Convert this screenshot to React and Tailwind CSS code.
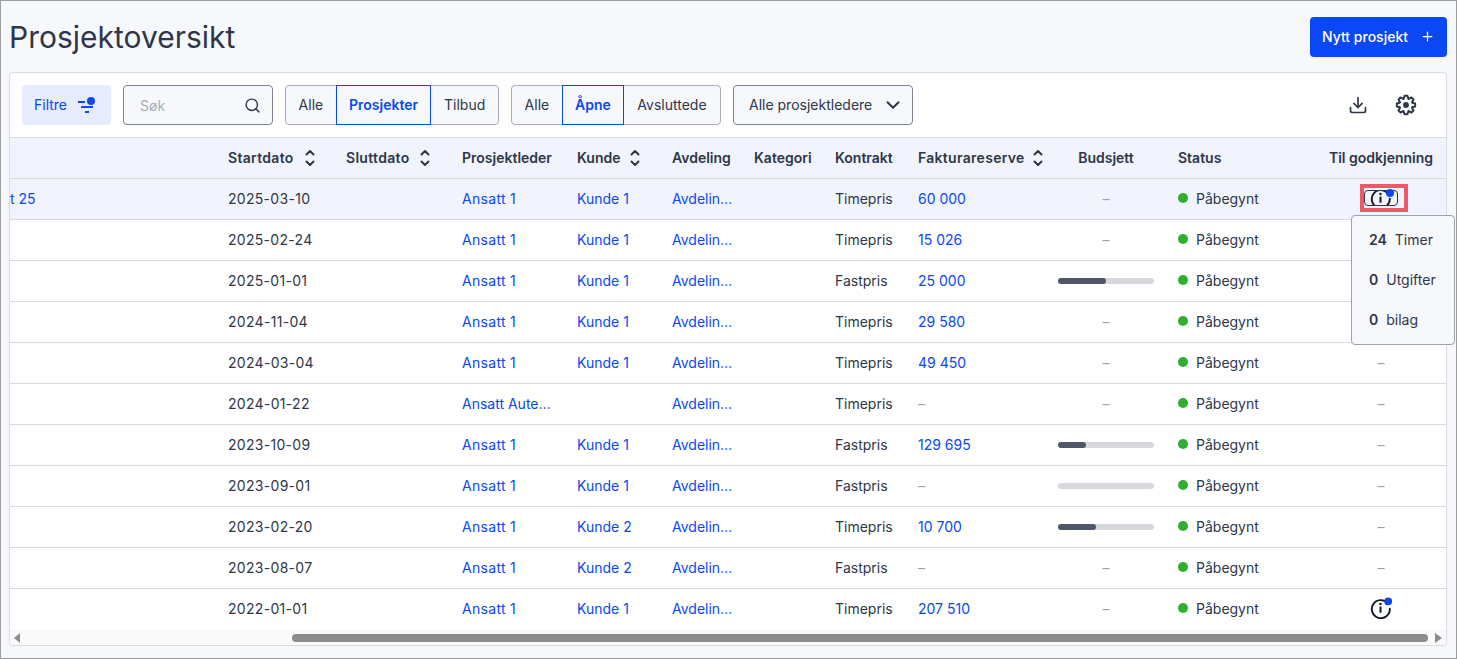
import React from "react";
import { Search, Download, ChevronDown, Plus } from "lucide-react";

const cols = "grid grid-cols-[218px_118px_116px_115px_95px_82px_81px_83px_128px_120px_150px_130px]";

const rows = [
  ["2025-03-10", "Ansatt 1", "Kunde 1", "Timepris", "60 000", null, "info-open"],
  ["2025-02-24", "Ansatt 1", "Kunde 1", "Timepris", "15 026", null, ""],
  ["2025-01-01", "Ansatt 1", "Kunde 1", "Fastpris", "25 000", 50, ""],
  ["2024-11-04", "Ansatt 1", "Kunde 1", "Timepris", "29 580", null, ""],
  ["2024-03-04", "Ansatt 1", "Kunde 1", "Timepris", "49 450", null, "-"],
  ["2024-01-22", "Ansatt Aute…", "", "Timepris", "-", null, "-"],
  ["2023-10-09", "Ansatt 1", "Kunde 1", "Fastpris", "129 695", 29, "-"],
  ["2023-09-01", "Ansatt 1", "Kunde 1", "Fastpris", "-", 0, "-"],
  ["2023-02-20", "Ansatt 1", "Kunde 2", "Timepris", "10 700", 40, "-"],
  ["2023-08-07", "Ansatt 1", "Kunde 2", "Fastpris", "-", null, "-"],
  ["2022-01-01", "Ansatt 1", "Kunde 1", "Timepris", "207 510", null, "info"],
];

function Sort() {
  return (
    <svg width="12" height="20" viewBox="0 0 12 20" fill="none" stroke="#2e3648" strokeWidth="2" strokeLinecap="round" strokeLinejoin="round">
      <path d="M2.5 6.5 6 3l3.5 3.5" />
      <path d="M2.5 13.5 6 17l3.5-3.5" />
    </svg>
  );
}

function Info({ noDot }) {
  return (
    <svg className="shrink-0" width="22" height="22" viewBox="0 0 22 22" fill="none">
      <path d="M17.6 6.2A9 9 0 1 0 19.8 11.8" stroke="#111827" strokeWidth="1.9" strokeLinecap="round" />
      <circle cx="10.5" cy="7" r="1.25" fill="#111827" />
      <rect x="9.5" y="9.6" width="2" height="6.2" rx="0.5" fill="#111827" />
      {!noDot && <circle cx="18.2" cy="4.4" r="3.9" fill="#0a47f5" />}
    </svg>
  );
}

function gearPath() {
  const teeth = 8;
  const pts = [];
  for (let k = 0; k < teeth; k++) {
    const a = (k * 2 * Math.PI) / teeth - Math.PI / 2;
    const step = (2 * Math.PI) / teeth;
    [[7.2, -0.46], [10.1, -0.2], [10.1, 0.2], [7.2, 0.46]].forEach(([r, f]) => {
      const t = a + f * step;
      pts.push(`${(12 + r * Math.cos(t)).toFixed(2)} ${(12 + r * Math.sin(t)).toFixed(2)}`);
    });
  }
  return "M" + pts.join("L") + "Z";
}

function Gear() {
  return (
    <svg width="22" height="22" viewBox="0 0 24 24" fill="none" stroke="#2e3648" strokeWidth="2.2" strokeLinejoin="round">
      <path d={gearPath()} />
      <circle cx="12" cy="12" r="3.2" fill="#2e3648" stroke="none" />
    </svg>
  );
}

function FilterIcon() {
  return (
    <svg width="18" height="18" viewBox="0 0 18 18" fill="none" stroke="#0a47f5" strokeWidth="2">
      <path d="M0 6h7M3 11h12M7 16h4" />
      <circle cx="13" cy="5" r="4" fill="#0a47f5" stroke="none" />
    </svg>
  );
}

function Seg({ items, active, width = "" }) {
  return (
    <div className={`flex h-10 rounded border border-[#a9adb6] bg-[#f6f8fc] text-[14px] ${width}`}>
      {items.map((t, i) => (
        <div
          key={t}
          className={
            t === active
              ? "flex items-center px-[12.2px] pb-[2px] -my-px border border-[#0a47f5] font-semibold text-[#0a47f5]"
              : i === items.length - 1
                ? "flex grow items-center justify-center pb-[2px] text-[#2e3648]"
                : "flex items-center px-[12.6px] pb-[2px] text-[#2e3648]"
          }
        >
          {t}
        </div>
      ))}
    </div>
  );
}

function Header({ label, sort, center, wide, gap = "gap-[10px]" }) {
  return (
    <div className={center ? "flex items-center justify-center" : `flex items-center ${gap}`}>
      <span className={wide ? "pb-[2px] tracking-[0.3px]" : "pb-[2px]"}>{label}</span>
      {sort && <Sort />}
    </div>
  );
}

function Row({ r, i }) {
  const [date, pl, kunde, kontrakt, res, bud, last] = r;
  const link = "truncate text-[#0a47f5]";
  return (
    <div className={`${cols} h-[41px] items-center border-b pb-[2px] text-[14px] text-[#2e3648] ${i === 10 ? "border-transparent" : "border-[#d9dbdf]"} ${i === 0 ? "bg-[#f1f4fd]" : "bg-white"}`}>
      <div className="text-[#0a47f5]">{i === 0 ? "t 25" : ""}</div>
      <div className="tracking-[0.3px]">{date}</div>
      <div />
      <div className={pl === "Ansatt 1" ? `${link} tracking-[0.3px]` : link}>{pl}</div>
      <div className={link}>{kunde}</div>
      <div className={link}>Avdelin…</div>
      <div />
      <div>{kontrakt}</div>
      <div className={res === "-" ? "text-[#9aa1ad]" : "text-[#0a47f5]"}>{res === "-" ? "–" : res}</div>
      <div className="flex justify-center">
        {bud === null ? (
          <span className="text-[#9aa1ad]">–</span>
        ) : (
          <div className="mt-[2px] h-[6px] w-[96px] rounded-full bg-[#d6d8dc]">
            <div className="h-full rounded-full bg-[#50576a]" style={{ width: `${bud}%` }} />
          </div>
        )}
      </div>
      <div className="flex items-center gap-2 pl-3">
        <span className="h-[10px] w-[10px] rounded-full bg-[#2fae2f]" />
        <span>Påbegynt</span>
      </div>
      <div className="flex justify-center text-[#9aa1ad]">
        {last === "-" && "–"}
        {last === "info" && <Info />}
        {last === "info-open" && (
          <div className="ml-[6px] flex h-7 w-12 items-center border-4 border-[#ea5a6b]">
            <div className="relative h-4 w-[34px]">
              <div className="flex h-4 w-[34px] items-center justify-center overflow-hidden rounded border border-[#2e3648]">
                <Info noDot />
              </div>
              <span className="absolute -top-[1px] left-[22px] h-2 w-2 rounded-full bg-[#0a47f5]" />
            </div>
          </div>
        )}
      </div>
    </div>
  );
}

export default function App() {
  return (
    <div className="relative h-[659px] w-[1457px] overflow-hidden border border-[#9b9da3] bg-[#f6f8fc] font-['Inter',sans-serif]">
      <div className="flex h-[71px] items-start justify-between pl-[8px] pr-[9px] pt-4">
        <h1 className="text-[30px] leading-10 text-[#2e3648]">Prosjektoversikt</h1>
        <button className="flex h-10 w-[137px] items-center gap-[12px] whitespace-nowrap rounded bg-[#0a47f5] pb-[2px] pl-3 text-[14px] font-medium text-white">
          Nytt prosjekt
          <Plus size={15} strokeWidth={2} />
        </button>
      </div>

      <div className="ml-2 w-[1438px] overflow-hidden rounded border border-[#d9dbdf] bg-white">
        <div className="flex h-[64px] items-center pl-3 pr-[29px]">
          <div className="flex h-10 w-[89px] items-center gap-[11px] rounded bg-[#e6ecfe] pl-3 text-[14px] text-[#0a47f5]">
            <span className="pb-[2px]">Filtre</span>
            <FilterIcon />
          </div>
          <div className="ml-3 flex h-10 w-[150px] items-center justify-between rounded border border-[#7c8290] bg-[#f6f8fc] pl-4 pr-[11px] text-[14px] text-[#a9adb6]">
            Søk
            <Search size={17} color="#2e3648" strokeWidth={2} />
          </div>
          <div className="ml-3"><Seg items={["Alle", "Prosjekter", "Tilbud"]} active="Prosjekter" width="w-[214px]" /></div>
          <div className="ml-3"><Seg items={["Alle", "Åpne", "Avsluttede"]} active="Åpne" width="w-[210px]" /></div>
          <div className="ml-3 flex h-10 w-[180px] items-center justify-between rounded border border-[#7c8290] bg-[#f6f8fc] pl-[15px] pr-[8px] text-[14px] text-[#2e3648]">
            <span className="pb-[2px]">Alle prosjektledere</span>
            <ChevronDown size={22} strokeWidth={2.2} />
          </div>
          <div className="ml-auto flex items-center gap-[27px]">
            <Download size={20} color="#2e3648" strokeWidth={2} />
            <Gear />
          </div>
        </div>

        <div className={`${cols} h-[42px] items-center border-y border-[#d9dbdf] bg-[#f1f4fd] text-[14px] font-semibold text-[#2e3648]`}>
          <div />
          <Header label="Startdato" sort wide />
          <Header label="Sluttdato" sort wide />
          <Header label="Prosjektleder" />
          <Header label="Kunde" sort gap="gap-[8px]" />
          <Header label="Avdeling" />
          <Header label="Kategori" />
          <Header label="Kontrakt" />
          <Header label="Fakturareserve" sort wide gap="gap-[7px]" />
          <Header label="Budsjett" center />
          <div className="pb-[2px] pl-3">Status</div>
          <Header label="Til godkjenning" center />
        </div>

        {rows.map((r, i) => (
          <Row key={i} r={r} i={i} />
        ))}

        <div className="flex h-[15px] items-center bg-[#fafafa] pl-[3px] pr-[3px]">
          <svg width="10" height="10" viewBox="0 0 10 10"><path d="M7 0v10L1 5z" fill="#8c8c8c" /></svg>
          <div className="ml-[269px] h-2 w-[1136px] rounded-full bg-[#8c8c8c]" />
          <svg className="ml-auto" width="10" height="10" viewBox="0 0 10 10"><path d="M2 0v10l7-5z" fill="#8c8c8c" /></svg>
        </div>
      </div>

      <div className="absolute left-[1350px] top-[214px] flex h-[130px] w-[104px] flex-col gap-[19px] rounded border border-[#9da2ad] bg-[#f6f8fc] pl-[17px] pt-[13px] text-[14px] text-[#2e3648]">
        <div className="flex gap-2"><b className="font-semibold">24</b><span>Timer</span></div>
        <div className="flex gap-2"><b className="font-semibold">0</b><span>Utgifter</span></div>
        <div className="flex gap-2"><b className="font-semibold">0</b><span>bilag</span></div>
      </div>
    </div>
  );
}
